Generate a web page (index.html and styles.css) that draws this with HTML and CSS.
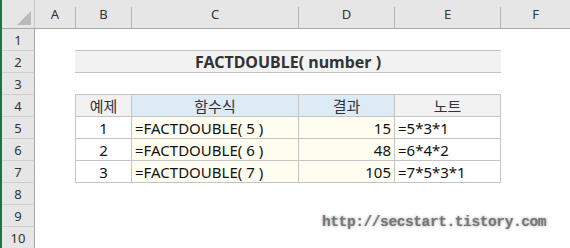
FILE: index.html
```html
<!DOCTYPE html>
<html lang="ko">
<head>
<meta charset="utf-8">
<link rel="stylesheet" href="styles.css">
</head>
<body>
<div class="sheet">
  <div class="colhead">
    <div class="corner"><svg width="33" height="28" viewBox="0 0 33 28"><polygon points="17,25 31,25 31,11" fill="#b9b9b9"/></svg></div>
    <div class="ch w-a">A</div>
    <div class="ch w-b">B</div>
    <div class="ch w-c">C</div>
    <div class="ch w-d">D</div>
    <div class="ch w-e">E</div>
    <div class="ch w-f">F</div>
  </div>
  <div class="row"><div class="rh">1</div></div>
  <div class="row"><div class="rh">2</div><div class="spacer"></div><div class="title">FACTDOUBLE( number )</div></div>
  <div class="row"><div class="rh">3</div></div>
  <div class="row"><div class="rh">4</div><div class="spacer"></div>
    <div class="c cb hd gray first">예제</div>
    <div class="c cc hd blue">함수식</div>
    <div class="c cd hd blue">결과</div>
    <div class="c ce hd gray">노트</div>
  </div>
  <div class="row"><div class="rh">5</div><div class="spacer"></div>
    <div class="c cb center first">1</div>
    <div class="c cc yel">=FACTDOUBLE( 5 )</div>
    <div class="c cd yel right">15</div>
    <div class="c ce">=5*3*1</div>
  </div>
  <div class="row"><div class="rh">6</div><div class="spacer"></div>
    <div class="c cb center first">2</div>
    <div class="c cc yel">=FACTDOUBLE( 6 )</div>
    <div class="c cd yel right">48</div>
    <div class="c ce">=6*4*2</div>
  </div>
  <div class="row"><div class="rh">7</div><div class="spacer"></div>
    <div class="c cb center first">3</div>
    <div class="c cc yel">=FACTDOUBLE( 7 )</div>
    <div class="c cd yel right">105</div>
    <div class="c ce">=7*5*3*1</div>
  </div>
  <div class="row"><div class="rh">8</div></div>
  <div class="row"><div class="rh">9</div></div>
  <div class="row"><div class="rh">10</div></div>
  <div class="watermark">http://secstart.tistory.com</div>
</div>
</body>
</html>
```
FILE: styles.css
```css
html, body { margin: 0; padding: 0; background: #fff; }
body { width: 570px; height: 248px; overflow: hidden; }
.sheet {
  position: relative;
  width: 570px;
  height: 248px;
  overflow: hidden;
  font-family: "Noto Sans", "Noto Sans CJK KR", sans-serif;
  font-size: 15px;
  color: #111;
}
.sheet::before {
  content: "";
  position: absolute;
  left: 0; top: 0; bottom: 0;
  width: 2px;
  background: #217346;
  z-index: 2;
}
.colhead {
  display: flex;
  height: 28px;
  background: #e6e6e6;
  border-bottom: 1px solid #a9a9a9;
}
.corner {
  width: 34px;
  flex: none;
  border-right: 1px solid #c8c8c8;
  display: flex;
}
.ch {
  flex: none;
  box-sizing: border-box;
  border-right: 1px solid #b4b4b4;
  display: flex;
  align-items: center;
  justify-content: center;
  font-size: 13px;
  color: #333;
  margin-top: 7px;
  padding-bottom: 7px;
  height: 21px;
}
.w-a { width: 41px; }
.w-b { width: 56px; }
.w-c { width: 167px; }
.w-d { width: 96px; }
.w-e { width: 106px; }
.w-f { width: 69px; border-right: none; }
.row {
  display: flex;
  height: 22px;
}
.rh {
  flex: none;
  box-sizing: border-box;
  width: 35px;
  height: 22px;
  background: #e6e6e6;
  border-right: 1px solid #a9a9a9;
  border-bottom: 1px solid #cfcfcf;
  display: flex;
  align-items: center;
  justify-content: center;
  font-size: 13px;
  color: #333;
  padding-left: 2px;
}
.spacer { width: 40px; flex: none; }
.title {
  box-sizing: border-box;
  width: 426px;
  height: 23px;
  margin-top: -1px;
  background: #f2f2f2;
  border-top: 1px solid #c4c4c4;
  border-bottom: 1px solid #c4c4c4;
  display: flex;
  align-items: center;
  justify-content: center;
  font-weight: bold;
  font-size: 16px;
  color: #333;
}
.c {
  flex: none;
  box-sizing: border-box;
  height: 22px;
  border-right: 1px solid #c4c4c4;
  border-bottom: 1px solid #c4c4c4;
  display: flex;
  align-items: center;
  padding: 0 3px;
  white-space: nowrap;
}
.first { border-left: 1px solid #c4c4c4; }
.cb { width: 57px; }
.cc { width: 167px; }
.cd { width: 96px; }
.ce { width: 106px; }
.hd {
  justify-content: center;
  box-shadow: 0 -1px 0 #c4c4c4;
  color: #333;
}
.gray { background: #f2f2f2; }
.blue { background: #ddebf7; }
.yel { background: #fffdf0; }
.center { justify-content: center; }
.right { justify-content: flex-end; }
.watermark {
  position: absolute;
  left: 322px;
  top: 214px;
  font-family: "Liberation Mono", monospace;
  font-weight: bold;
  font-size: 14.5px;
  letter-spacing: -0.4px;
  color: #767676;
  text-shadow: 0 0 3px #9a9a9a;
}
```
